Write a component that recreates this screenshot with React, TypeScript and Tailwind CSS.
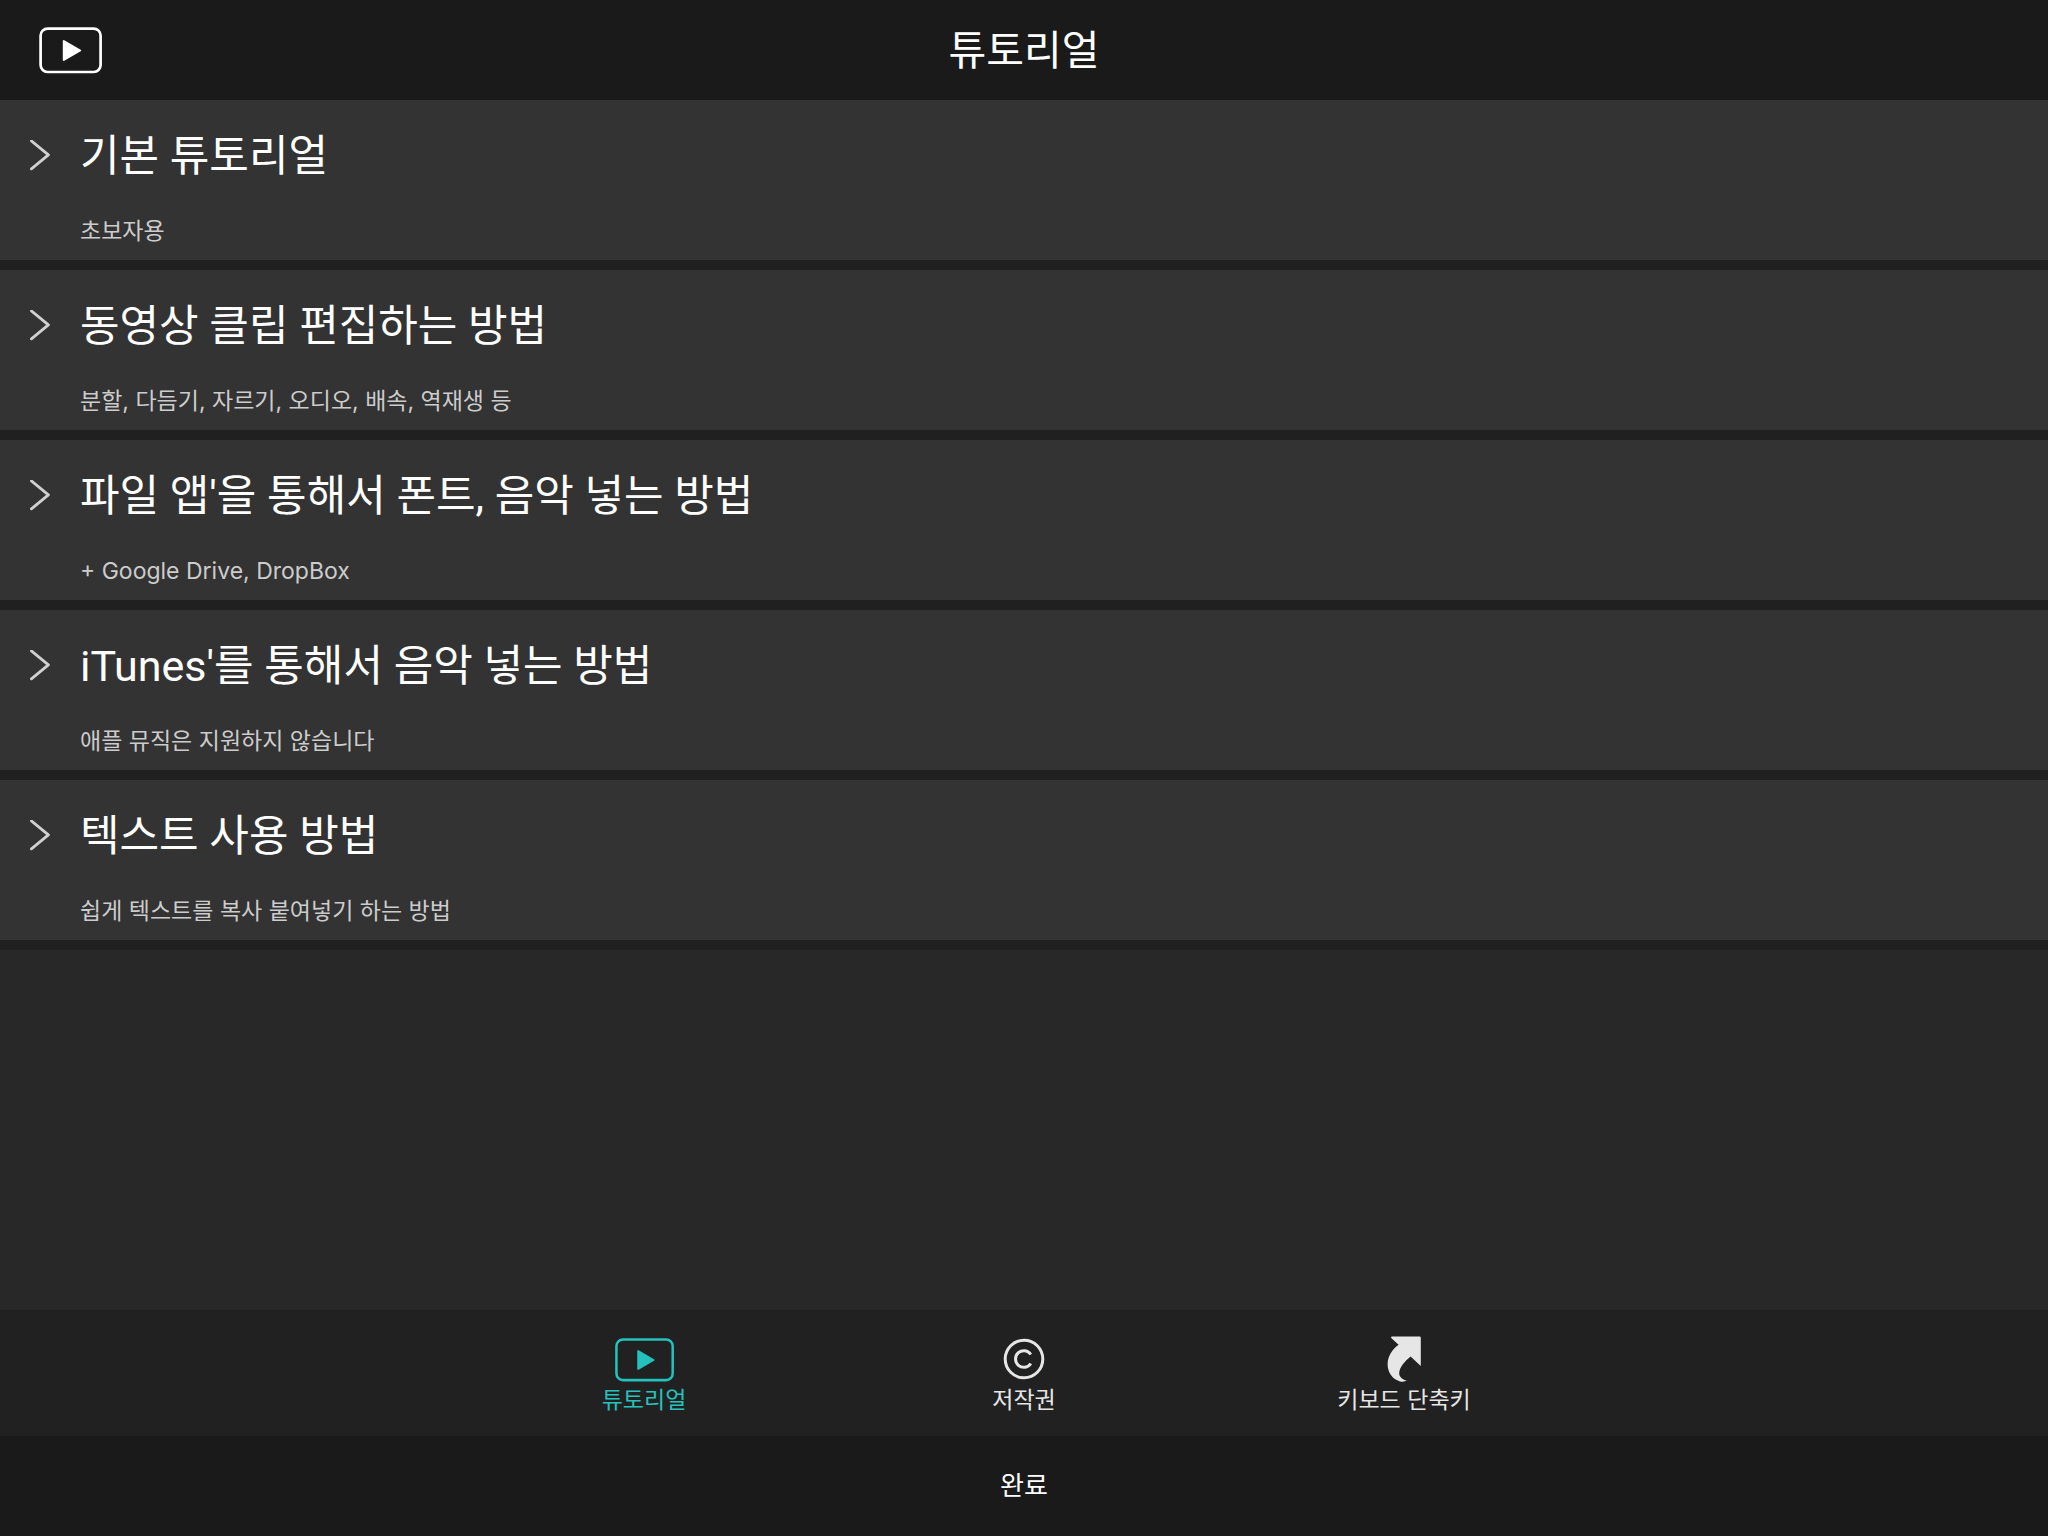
import { useState } from 'react';

const tutorials = [
  { title: '기본 튜토리얼', description: '초보자용' },
  { title: '동영상 클립 편집하는 방법', description: '분할, 다듬기, 자르기, 오디오, 배속, 역재생 등' },
  { title: "파일 앱'을 통해서 폰트, 음악 넣는 방법", description: '+ Google Drive, DropBox' },
  { title: "iTunes'를 통해서 음악 넣는 방법", description: '애플 뮤직은 지원하지 않습니다' },
  { title: '텍스트 사용 방법', description: '쉽게 텍스트를 복사 붙여넣기 하는 방법' },
];

function PlayIcon({ className }: { className: string }) {
  return (
    <svg viewBox="0 0 64 48" className={className} fill="none" aria-hidden="true">
      <rect x="2.6" y="2.6" width="60" height="43.4" rx="7" stroke="currentColor" strokeWidth="2.7" />
      <path
        d="M25.8 15v19L42.2 24.5Z"
        fill="currentColor"
        stroke="currentColor"
        strokeWidth="2"
        strokeLinejoin="round"
      />
    </svg>
  );
}

function ChevronIcon() {
  return (
    <svg viewBox="0 0 20 32" className="h-8 w-5 text-[#d0d0d0]" fill="none" aria-hidden="true">
      <path
        d="M1.4 0.9 18.4 14.8 1.4 28.8"
        stroke="currentColor"
        strokeWidth="2.8"
        strokeLinecap="round"
        strokeLinejoin="round"
      />
    </svg>
  );
}

function CopyrightIcon() {
  return (
    <svg viewBox="0 0 44 44" className="h-11 w-11" fill="none" aria-hidden="true">
      <circle cx="22" cy="22" r="18.8" stroke="currentColor" strokeWidth="3" />
      <path
        d="M28.8 17.5a8.3 8.3 0 1 0 0 9"
        stroke="currentColor"
        strokeWidth="3"
        strokeLinecap="butt"
      />
    </svg>
  );
}

function ShortcutIcon() {
  return (
    <svg viewBox="0 0 36 48" className="h-12 w-9" aria-hidden="true">
      <path
        d="M6.2 1.5H33.6Q34.8 1.5 34.8 2.7V31L24.6 21.6C18.5 26.5 13.4 32.5 13.2 38.2C13.2 41.8 16.2 44.4 20.8 45.6C19.2 46.6 16.6 47 14 46.4C6.4 44.6 1.6 37.2 1.6 29.6C1.6 21 6.4 14.4 12.6 9.8L5.2 2.9Q4.6 1.5 6.2 1.5Z"
        fill="currentColor"
      />
    </svg>
  );
}

const tabs = [
  { id: 'tutorial', label: '튜토리얼', icon: <PlayIcon className="h-[45px] w-[60px]" /> },
  { id: 'copyright', label: '저작권', icon: <CopyrightIcon /> },
  { id: 'shortcuts', label: '키보드 단축키', icon: <ShortcutIcon /> },
];

export default function App() {
  const [activeTab, setActiveTab] = useState('tutorial');

  return (
    <div className="flex min-h-screen flex-col bg-[#282828] font-['Inter','Noto_Sans_CJK_KR',sans-serif] text-white">
      <header className="grid h-[100px] grid-cols-[1fr_auto_1fr] items-center bg-[#1a1a1a] px-[38px]">
        <PlayIcon className="h-12 w-16" />
        <h1 className="text-[41px] leading-[60px]">튜토리얼</h1>
      </header>

      <main className="flex-1">
        <ul>
          {tutorials.map((tutorial) => (
            <li key={tutorial.title} className="border-b-[10px] border-[#202020]">
              <button
                type="button"
                className="grid w-full grid-cols-[50px_1fr] items-center bg-[#333333] pt-6 pb-3.5 pl-[30px] text-left"
              >
                <ChevronIcon />
                <span className="font-['Roboto','Noto_Sans_CJK_KR',sans-serif] text-[43px] leading-[64px]">
                  {tutorial.title}
                </span>
                <span className="col-start-2 mt-7 text-[23px] leading-[30px] text-[#cccccc]">
                  {tutorial.description}
                </span>
              </button>
            </li>
          ))}
        </ul>
      </main>

      <nav className="flex h-[126px] justify-center bg-[#212121]">
        <div className="grid w-full max-w-[1140px] grid-cols-3">
          {tabs.map((tab) => (
            <button
              key={tab.id}
              type="button"
              onClick={() => setActiveTab(tab.id)}
              className={`flex flex-col items-center pt-6 ${
                activeTab === tab.id ? 'text-[#25c1bc]' : 'text-[#e6e6e6]'
              }`}
            >
              <span className="flex h-[50px] items-center">{tab.icon}</span>
              <span className="text-[23px] leading-[32px]">{tab.label}</span>
            </button>
          ))}
        </div>
      </nav>

      <button type="button" className="h-[100px] w-full bg-[#1a1a1a] text-[26px] leading-[30px]">
        완료
      </button>
    </div>
  );
}
